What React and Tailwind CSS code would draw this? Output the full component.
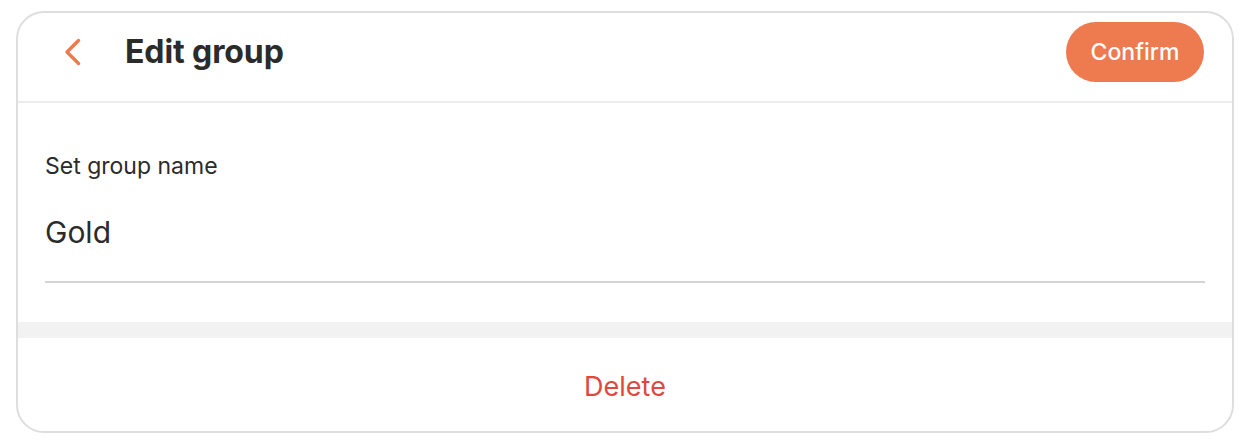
export default function App() {
    return (
        <div className="w-[1250px] h-[444px] bg-white pl-[16px] pt-[11px]" style={{ fontFamily: 'Inter, "Noto Sans", sans-serif' }}>
            <div className="w-[1218px] h-[422px] border-2 border-[#dedede] rounded-[28px] overflow-hidden flex flex-col">
                {/* header */}
                <div className="h-[90px] shrink-0 flex items-center border-b-2 border-[#ececec] pl-[44px] pr-[28px] pb-[10px]">
                    <button className="w-[20px] h-[30px] flex items-center justify-center">
                        <svg width="17" height="28" viewBox="0 0 17 28" fill="none">
                            <path d="M14.5 2.5 L3 14 L14.5 25.5" stroke="#ee7a4f" strokeWidth="3.4" strokeLinecap="round" strokeLinejoin="round" />
                        </svg>
                    </button>
                    <h2 className="ml-[43px] text-[32px] font-bold text-[#2b2b2b] tracking-[-0.1px]">Edit group</h2>
                    <button className="ml-auto h-[60px] w-[138px] rounded-full bg-[#ee7a4f] text-white text-[23px] font-medium">
                        Confirm
                    </button>
                </div>
                {/* name field */}
                <div className="px-[27px] pt-[49px]">
                    <p className="text-[23px] text-[#2b2b2b] leading-[28px]">Set group name</p>
                    <div className="mt-[34px] pb-[31px] border-b-2 border-[#d4d4d4]">
                        <p className="text-[30px] text-[#2b2b2b] leading-[36px]">Gold</p>
                    </div>
                </div>
                <div className="mt-[39px] h-[16px] bg-[#f2f2f2]" />
                <div className="flex-1 flex items-center justify-center">
                    <button className="mt-[6px] text-[27px] text-[#e2473d]">Delete</button>
                </div>
            </div>
        </div>
    );
}
